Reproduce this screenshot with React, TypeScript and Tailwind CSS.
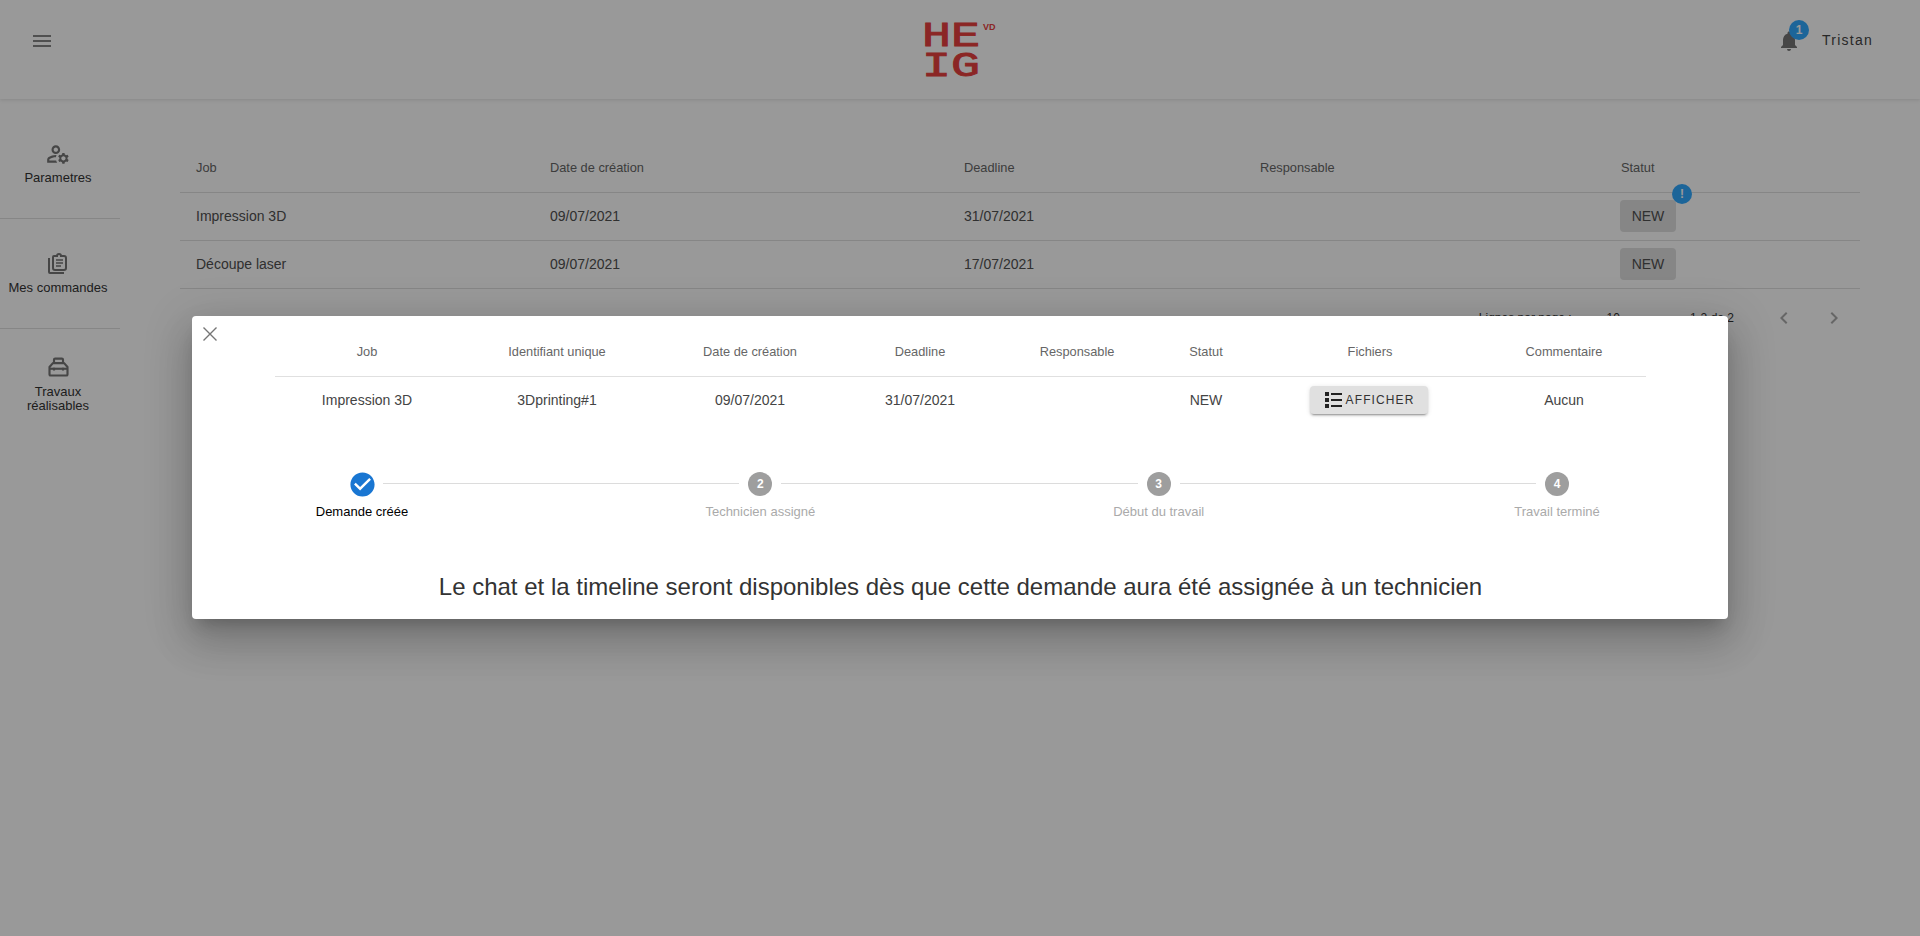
import {
  MdOutlineManageAccounts,
  MdMenu,
  MdNotifications,
  MdChevronLeft,
  MdChevronRight,
  MdCheckCircle,
} from 'react-icons/md'

const font = { fontFamily: '"Liberation Sans", Arial, sans-serif' }

const jobCols = 'grid grid-cols-[354px_414px_296px_361px_255px]'
const detailCols = 'grid grid-cols-[184px_196px_190px_150px_164px_94px_234px_154px_5px]'

const jobs = [
  { name: 'Impression 3D', created: '09/07/2021', deadline: '31/07/2021', flagged: true },
  { name: 'Découpe laser', created: '09/07/2021', deadline: '17/07/2021', flagged: false },
]

const steps = ['Technicien assigné', 'Début du travail', 'Travail terminé']

function Logo() {
  return (
    <svg width="80" height="68" viewBox="0 0 80 68" className="block">
      <g fill="#e8403e" stroke="#e8403e" strokeWidth="0.9" fontFamily="Liberation Mono">
        <text x="1" y="28" fontSize="35" textLength="58" lengthAdjust="spacingAndGlyphs">HE</text>
        <text x="1" y="58" fontSize="35" textLength="58" lengthAdjust="spacingAndGlyphs">IG</text>
      </g>
      <text x="62" y="12" fontSize="9" fontWeight="700" fill="#e8403e" fontFamily="Liberation Sans">VD</text>
    </svg>
  )
}

function OrdersIcon() {
  return (
    <svg width="24" height="24" viewBox="0 0 24 24" fill="none" stroke="#757575" strokeWidth="2" className="block">
      <path d="M3 6v14a1 1 0 0 0 1 1h14" />
      <path d="M8 4h3a2 2 0 0 1 4 0h3a2 2 0 0 1 2 2v10a2 2 0 0 1-2 2H9a2 2 0 0 1-2-2V5a1 1 0 0 1 1-1z" />
      <path d="M10 8h7M10 11h7M10 14h5" strokeWidth="1.7" />
    </svg>
  )
}

function ToolboxIcon() {
  return (
    <svg width="27" height="27" viewBox="0 0 24 24" fill="none" stroke="#757575" strokeWidth="1.9" className="block">
      <path d="M7 9h10l3 3.500V19a1 1 0 0 1-1 1H5a1 1 0 0 1-1-1v-6.500z" strokeLinejoin="round" />
      <path d="M8 9V6a1 1 0 0 1 1-1h6a1 1 0 0 1 1 1v3" />
      <path d="M4 14h16" />
      <path d="M8 13v2.500M16 13v2.500" />
    </svg>
  )
}

function CloseIcon() {
  return (
    <svg width="14" height="14" viewBox="0 0 14 14" stroke="#757575" strokeWidth="1.4" className="block">
      <path d="M0.500 0.500L13.500 13.500M13.500 0.500L0.500 13.500" />
    </svg>
  )
}

function ListIcon() {
  return (
    <svg width="20" height="20" viewBox="0 0 20 20" fill="#222" className="block">
      <rect x="1" y="2" width="4" height="4" />
      <rect x="1" y="8" width="4" height="4" />
      <rect x="1" y="14" width="4" height="4" />
      <rect x="7" y="3" width="11" height="2" />
      <rect x="7" y="9" width="11" height="2" />
      <rect x="7" y="15" width="11" height="2" />
    </svg>
  )
}

function SideItem({ icon, label, className }: { icon: React.ReactNode; label: React.ReactNode; className: string }) {
  return (
    <div className={`flex flex-col items-center pr-1 text-center text-[13px] leading-[14px] text-[#333] ${className}`}>
      {icon}
      <span>{label}</span>
    </div>
  )
}

export default function App() {
  return (
    <div className="relative h-[936px] w-[1920px] overflow-hidden bg-white" style={font}>
      <header className="relative flex h-[99px] items-center justify-between pb-[18px] pl-[30px] pr-[47px] shadow-[0_1px_4px_rgba(0,0,0,0.12)]">
        <MdMenu size={24} color="#858585" />
        <div className="absolute left-[921px] top-[18px]">
          <Logo />
        </div>
        <div className="flex items-center gap-[21px]">
          <div className="relative">
            <MdNotifications size={24} color="#757575" />
            <span className="absolute -right-2 -top-[9px] flex h-5 w-5 items-center justify-center rounded-full bg-[#30a8ff] text-[12px] font-bold text-white">1</span>
          </div>
          <span className="text-[14px] tracking-[1.25px] text-[#444]">Tristan</span>
        </div>
      </header>

      <div className="flex">
        <aside className="w-[120px] shrink-0">
          <div className="h-[120px] border-b border-[#e0e0e0] pt-[42px]">
            <SideItem className="gap-1" icon={<MdOutlineManageAccounts size={26} color="#757575" />} label="Parametres" />
          </div>
          <div className="h-[110px] border-b border-[#e0e0e0] pt-[33px]">
            <SideItem className="gap-[5px]" icon={<OrdersIcon />} label="Mes commandes" />
          </div>
          <div className="pt-6">
            <SideItem className="gap-[5px]" icon={<ToolboxIcon />} label={<>Travaux<br />réalisables</>} />
          </div>
        </aside>

        <main className="ml-[60px] w-[1680px]">
          <div className={`${jobCols} h-[94px] items-end border-b border-[#e0e0e0] pb-4 text-[12.8px] leading-4 text-[#666]`}>
            {['Job', 'Date de création', 'Deadline', 'Responsable', 'Statut'].map(h => (
              <div key={h} className="pl-4">{h}</div>
            ))}
          </div>
          {jobs.map(job => (
            <div key={job.name} className={`${jobCols} h-12 items-center border-b border-[#e0e0e0] text-[14px] text-[#505050]`}>
              <div className="pl-4">{job.name}</div>
              <div className="pl-4">{job.created}</div>
              <div className="pl-4">{job.deadline}</div>
              <div />
              <div className="pl-[15px]">
                <span className="relative -mt-px flex h-8 w-14 items-center justify-center rounded bg-[#e0e0e0] text-[14px] text-[#505050]">
                  NEW
                  {job.flagged && (
                    <span className="absolute -right-4 -top-4 flex h-5 w-5 items-center justify-center rounded-full bg-[#30a8ff] text-[12px] font-bold text-white">!</span>
                  )}
                </span>
              </div>
            </div>
          ))}
          <div className="flex h-[57px] items-center justify-end text-[12px] text-[#333]">
            <span>Lignes par page :</span>
            <span className="ml-[35px]">10</span>
            <span className="ml-[70px]">1-2 de 2</span>
            <MdChevronLeft size={24} color="#aaa" className="ml-[38px]" />
            <MdChevronRight size={24} color="#aaa" className="ml-[26px] mr-[14px]" />
          </div>
        </main>
      </div>

      <div className="absolute inset-0 bg-black/40" />

      <div className="absolute left-[192px] top-[316px] h-[303px] w-[1536px] rounded bg-white pl-[83px] pr-[82px] shadow-[0_11px_15px_-7px_rgba(0,0,0,0.2),0_24px_38px_3px_rgba(0,0,0,0.14),0_9px_46px_8px_rgba(0,0,0,0.12)]">
        <div className="absolute left-[11px] top-[11px]">
          <CloseIcon />
        </div>

        <div className={`${detailCols} h-[61px] items-end border-b border-[#e0e0e0] pb-4 text-center text-[12.8px] leading-4 text-[#666]`}>
          {['Job', 'Identifiant unique', 'Date de création', 'Deadline', 'Responsable', 'Statut', 'Fichiers', 'Commentaire'].map(h => (
            <div key={h}>{h}</div>
          ))}
        </div>
        <div className={`${detailCols} h-[47px] items-center text-center text-[14px] text-[#444]`}>
          <div>Impression 3D</div>
          <div>3Dprinting#1</div>
          <div>09/07/2021</div>
          <div>31/07/2021</div>
          <div />
          <div>NEW</div>
          <div className="flex justify-center">
            <button className="-ml-[2px] -mt-px flex h-[28px] w-[118px] items-center justify-center gap-[2px] rounded bg-[#e0e0e0] text-[12px] tracking-[1.1px] text-[#333] shadow-[0_3px_1px_-2px_rgba(0,0,0,0.2),0_2px_2px_0_rgba(0,0,0,0.14),0_1px_5px_0_rgba(0,0,0,0.12)]">
              <ListIcon />
              AFFICHER
            </button>
          </div>
          <div>Aucun</div>
        </div>

        <div className="mt-6 flex h-[94px] items-start pl-[75px] pr-[77px] pt-6">
          <div className="flex w-6 flex-col items-center">
            <MdCheckCircle size={29} color="#1976d2" className="-my-[2.5px] shrink-0" />
            <span className="mt-2 whitespace-nowrap text-[13px] leading-[16px] text-black">Demande créée</span>
          </div>
          {steps.map((label, i) => (
            <div key={label} className="flex flex-1 items-start">
              <div className="mx-[9px] mt-[11px] h-px flex-1 bg-[#dcdcdc]" />
              <div className="flex w-6 flex-col items-center">
                <span className="flex h-6 w-6 items-center justify-center rounded-full bg-[#9e9e9e] text-[12px] font-bold text-white">{i + 2}</span>
                <span className="mt-2 whitespace-nowrap text-[13px] leading-[16px] text-[#aaa]">{label}</span>
              </div>
            </div>
          ))}
        </div>

        <p className="mt-[29px] text-center text-[24px] leading-[32px] text-[#333]">
          Le chat et la timeline seront disponibles dès que cette demande aura été assignée à un technicien
        </p>
      </div>
    </div>
  )
}
